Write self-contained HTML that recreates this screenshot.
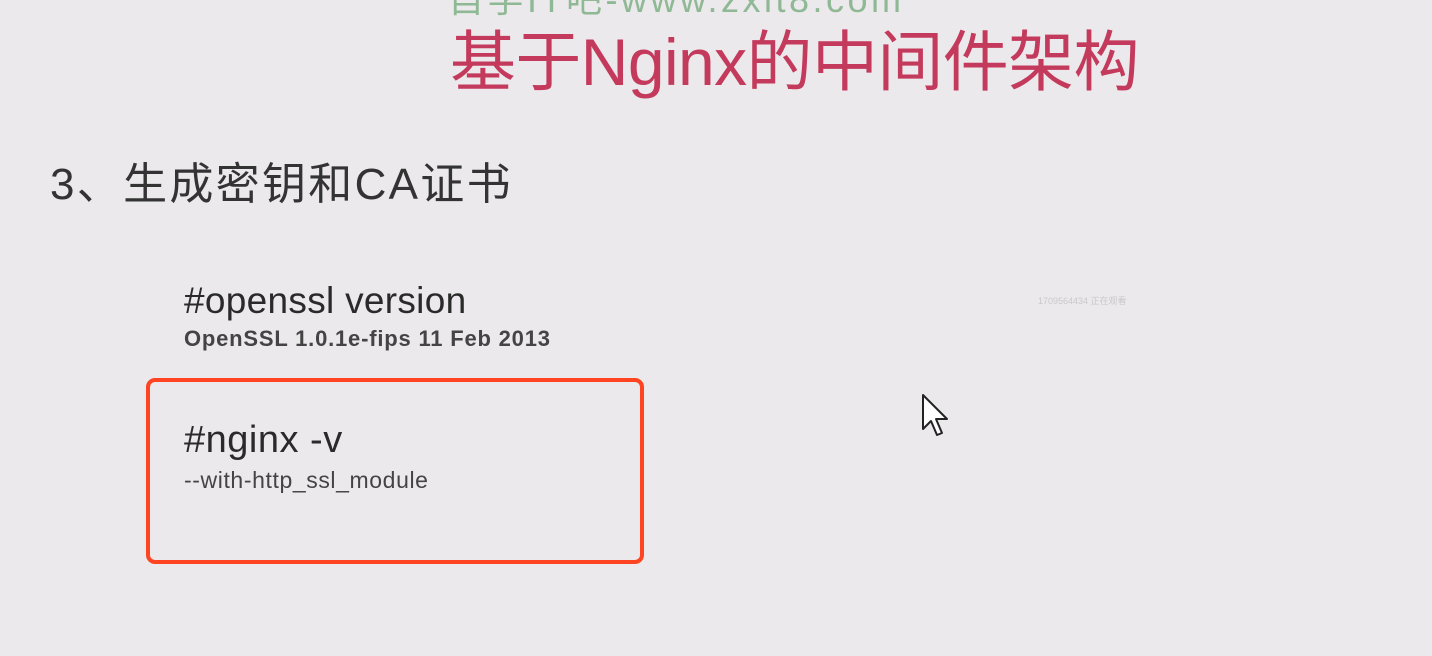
<!DOCTYPE html>
<html><head><meta charset="utf-8"><style>
html,body{margin:0;padding:0}
body{width:1432px;height:656px;background:#ebe9ec;position:relative;overflow:hidden;font-family:"Liberation Sans","Noto Sans CJK SC",sans-serif}
.t{position:absolute;white-space:nowrap;line-height:1}
</style></head><body>
<div class="t" style="left:448px;top:-18px;font-size:36px;color:#8fb894;letter-spacing:3.5px">自学IT吧-www.zxit8.com</div>
<div class="t" style="left:450px;top:29px;font-size:66px;color:#c43a5c;letter-spacing:-0.6px">基于Nginx的中间件架构</div>
<div class="t" style="left:50px;top:163px;font-size:44px;color:#333;letter-spacing:2.3px">3、生成密钥和CA证书</div>
<div class="t" style="left:184px;top:282px;font-size:37px;color:#2a2a2a;letter-spacing:0.3px">#openssl version</div>
<div class="t" style="left:184px;top:328px;font-size:22px;color:#444;font-weight:bold;letter-spacing:0.8px">OpenSSL 1.0.1e-fips 11 Feb 2013</div>
<div class="t" style="left:1038px;top:297px;font-size:9px;color:#c8c8ca">1709564434 正在观看</div>
<div style="position:absolute;left:146px;top:378px;width:490px;height:178px;border:4px solid #ff4422;border-radius:9px"></div>
<div class="t" style="left:184px;top:421px;font-size:38px;color:#2a2a2a;letter-spacing:0.5px">#nginx -v</div>
<div class="t" style="left:184px;top:469px;font-size:23px;color:#444;letter-spacing:0.6px">--with-http_ssl_module</div>
<svg style="position:absolute;left:920px;top:393px" width="32" height="48" viewBox="0 0 32 48">
<path d="M3 2 L3 36 L11 28 L17 42 L22 40 L16 26 L27 26 Z" fill="#fff" stroke="#222" stroke-width="2" stroke-linejoin="round"/>
</svg>
</body></html>
